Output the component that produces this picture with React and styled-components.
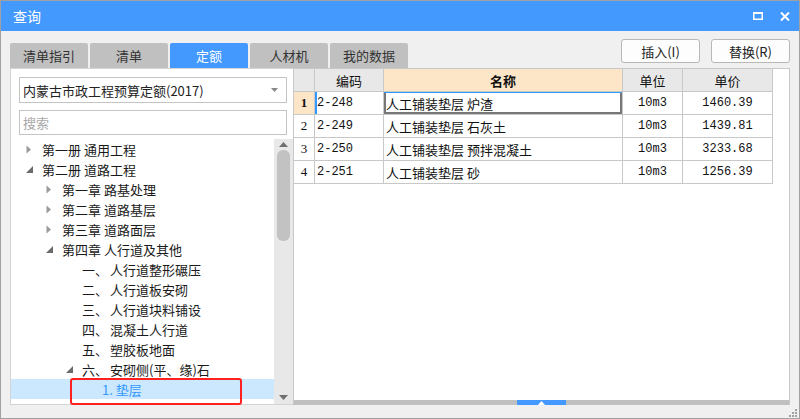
import React from 'react';
import styled, { createGlobalStyle } from 'styled-components';

const GlobalStyle = createGlobalStyle`
  html, body { margin: 0; padding: 0; background: #f0f0f0; }
  body { font-family: 'Microsoft YaHei', 'Noto Sans CJK SC', sans-serif; }
  * { box-sizing: border-box; }
`;

const Window = styled.div`
  width: 800px;
  height: 419px;
  border: 1px solid #a0a0a0;
  background: #f0f0f0;
  display: flex;
  flex-direction: column;
  overflow: hidden;
`;

const TitleBar = styled.div`
  height: 30px;
  background: #4499ff;
  display: flex;
  align-items: center;
  padding: 0 9px 0 12px;
  color: #fff;
  font-size: 14px;
`;

const Title = styled.span`
  flex: 1;
`;

const TitleButtons = styled.div`
  display: flex;
  align-items: center;
  gap: 17px;
`;

const TopRow = styled.div`
  height: 37px;
  display: flex;
  padding: 0 9px;
`;

const Tabs = styled.div`
  flex: 1;
  display: flex;
  align-items: flex-end;
  gap: 2px;
`;

const Tab = styled.div`
  width: 78px;
  height: 25px;
  border-radius: 2px 2px 0 0;
  background: ${p => (p.active ? '#4499ff' : '#c0c0c0')};
  color: ${p => (p.active ? '#fff' : '#333')};
  font-size: 13px;
  display: flex;
  align-items: center;
  justify-content: center;
`;

const Actions = styled.div`
  display: flex;
  gap: 11px;
  padding-top: 8px;
`;

const Button = styled.div`
  width: 79px;
  height: 24px;
  border: 1px solid #b8b8b8;
  border-radius: 3px;
  background: #fdfdfd;
  font-size: 13px;
  color: #222;
  display: flex;
  align-items: center;
  justify-content: center;
`;

const Main = styled.div`
  height: 337px;
  display: flex;
  padding: 0 9px;
`;

const LeftPanel = styled.div`
  width: 283px;
  background: #fff;
  border: 1px solid #d4d4d4;
  border-right: none;
  display: flex;
  flex-direction: column;
  padding-top: 8px;
`;

const Select = styled.div`
  height: 26px;
  margin: 0 6px 0 8px;
  border: 1px solid #c4c4c4;
  display: flex;
  align-items: center;
  padding: 0 8px 0 3px;
  font-size: 13px;
  color: #222;
  span { flex: 1; }
`;

const Search = styled.div`
  height: 25px;
  margin: 7px 6px 0 8px;
  border: 1px solid #c4c4c4;
  display: flex;
  align-items: center;
  padding: 0 3px;
  font-size: 13px;
  color: #a8a8a8;
`;

const TreeArea = styled.div`
  margin-top: 4px;
  flex: 1;
  display: flex;
`;

const TreeList = styled.div`
  flex: 1;
`;

const TreeRow = styled.div`
  position: relative;
  height: 20px;
  display: flex;
  align-items: center;
  padding-left: ${p => 15 + p.level * 20}px;
  background: ${p => (p.selected ? '#cce8ff' : 'transparent')};
  color: ${p => (p.selected ? '#3399ff' : '#1a1a1a')};
  font-size: 13px;
  white-space: nowrap;
`;

const ArrowBox = styled.span`
  width: 16px;
  height: 20px;
  display: flex;
  align-items: center;
  flex-shrink: 0;
`;

const Num = styled.span`
  display: inline-block;
  width: 28px;
  flex-shrink: 0;
`;

const Highlight = styled.div`
  position: absolute;
  left: 59px;
  top: -1px;
  width: 172px;
  height: 27px;
  border: 2px solid #ff2020;
  border-radius: 3px;
`;

const ScrollBar = styled.div`
  width: 19px;
  background: #e8e8e8;
  display: flex;
  flex-direction: column;
  align-items: center;
  padding: 3px 0 4px;
`;

const Thumb = styled.div`
  width: 13px;
  height: 91px;
  margin-top: 3px;
  border-radius: 6px;
  background: #c2c2c2;
`;

const Spacer = styled.div`
  flex: 1;
`;

const RightPanel = styled.div`
  flex: 1;
  background: #fff;
  border: 1px solid #c8c8c8;
  border-bottom: none;
  display: flex;
  flex-direction: column;
`;

const Grid = styled.div`
  display: grid;
  grid-template-columns: 21px 69px 239px 60px 90px;
  width: 479px;
`;

const Cell = styled.div`
  position: relative;
  height: 23px;
  border-right: 1px solid #c8c8c8;
  border-bottom: 1px solid #c8c8c8;
  display: flex;
  align-items: center;
  justify-content: ${p => (p.center ? 'center' : 'flex-start')};
  padding-left: ${p => (p.center ? 0 : 2)}px;
  font-size: ${p => (p.mono ? 12 : 13)}px;
  font-family: ${p =>
    p.mono
      ? "'Liberation Mono', 'Noto Sans CJK SC', monospace"
      : p.serif
      ? "'Liberation Serif', serif"
      : "'Microsoft YaHei', 'Noto Sans CJK SC', sans-serif"};
  font-weight: ${p => (p.bold ? 700 : 400)};
  background: ${p => p.bg || '#fff'};
  color: #111;
  ${p => p.cursor && 'box-shadow: inset 2px 0 0 #3399ff;'}
  ${p => p.focus && 'box-shadow: inset 0 1px 0 #3399ff, inset 2px 0 0 #777, inset -2px -2px 0 #777;'}
`;

const Splitter = styled.div`
  height: 5px;
  background: #c0c0c0;
  display: flex;
  justify-content: center;
`;

const SplitHandle = styled.div`
  width: 49px;
  background: #4499ff;
  display: flex;
  align-items: center;
  justify-content: center;
`;

const Footer = styled.div`
  flex: 1;
  display: flex;
  justify-content: flex-end;
  align-items: flex-end;
  padding: 0 2px 1px 0;
`;

const Collapsed = () => (
  <svg width="6" height="9" viewBox="0 0 6 9">
    <path d="M0.5 0.5 L5 4.5 L0.5 8.5 Z" fill="#9a9a9a" />
  </svg>
);

const Expanded = () => (
  <svg width="7" height="7" viewBox="0 0 7 7">
    <path d="M7 0 L7 7 L0 7 Z" fill="#6a6a6a" />
  </svg>
);

const tree = [
  { level: 0, arrow: 'c', text: '第一册 通用工程' },
  { level: 0, arrow: 'e', text: '第二册 道路工程' },
  { level: 1, arrow: 'c', text: '第一章 路基处理' },
  { level: 1, arrow: 'c', text: '第二章 道路基层' },
  { level: 1, arrow: 'c', text: '第三章 道路面层' },
  { level: 1, arrow: 'e', text: '第四章 人行道及其他' },
  { level: 2, num: '一、', text: '人行道整形碾压' },
  { level: 2, num: '二、', text: '人行道板安砌' },
  { level: 2, num: '三、', text: '人行道块料铺设' },
  { level: 2, num: '四、', text: '混凝土人行道' },
  { level: 2, num: '五、', text: '塑胶板地面' },
  { level: 2, arrow: 'e', num: '六、', text: '安砌侧(平、缘)石' },
  { level: 3, text: '1. 垫层', selected: true },
];

const rows = [
  ['2-248', '人工铺装垫层 炉渣', '10m3', '1460.39'],
  ['2-249', '人工铺装垫层 石灰土', '10m3', '1439.81'],
  ['2-250', '人工铺装垫层 预拌混凝土', '10m3', '3233.68'],
  ['2-251', '人工铺装垫层 砂', '10m3', '1256.39'],
];

export default function App() {
  return (
    <>
      <GlobalStyle />
      <Window>
        <TitleBar>
          <Title>查询</Title>
          <TitleButtons>
            <svg width="10" height="8" viewBox="0 0 10 8">
              <rect x="0.75" y="1" width="8.5" height="6.25" fill="none" stroke="#fff" strokeWidth="1.5" />
              <rect x="0" y="0" width="10" height="2" fill="#fff" />
            </svg>
            <svg width="10" height="9" viewBox="0 0 10 9">
              <path d="M1 0.5 L9 8.5 M9 0.5 L1 8.5" stroke="#fff" strokeWidth="2" />
            </svg>
          </TitleButtons>
        </TitleBar>

        <TopRow>
          <Tabs>
            <Tab>清单指引</Tab>
            <Tab>清单</Tab>
            <Tab active>定额</Tab>
            <Tab>人材机</Tab>
            <Tab>我的数据</Tab>
          </Tabs>
          <Actions>
            <Button>插入(I)</Button>
            <Button>替换(R)</Button>
          </Actions>
        </TopRow>

        <Main>
          <LeftPanel>
            <Select>
              <span>内蒙古市政工程预算定额(2017)</span>
              <svg width="7" height="4" viewBox="0 0 7 4">
                <path d="M0 0 L7 0 L3.5 4 Z" fill="#888" />
              </svg>
            </Select>
            <Search>搜索</Search>
            <TreeArea>
              <TreeList>
                {tree.map((t, i) => (
                  <TreeRow key={i} level={t.level} selected={t.selected}>
                    <ArrowBox>
                      {t.arrow === 'c' && <Collapsed />}
                      {t.arrow === 'e' && <Expanded />}
                    </ArrowBox>
                    {t.num && <Num>{t.num}</Num>}
                    <span>{t.text}</span>
                    {t.selected && <Highlight />}
                  </TreeRow>
                ))}
              </TreeList>
              <ScrollBar>
                <svg width="9" height="5" viewBox="0 0 9 5">
                  <path d="M0 5 L9 5 L4.5 0 Z" fill="#6f6f6f" />
                </svg>
                <Thumb />
                <Spacer />
                <svg width="9" height="5" viewBox="0 0 9 5">
                  <path d="M0 0 L9 0 L4.5 5 Z" fill="#6f6f6f" />
                </svg>
              </ScrollBar>
            </TreeArea>
          </LeftPanel>

          <RightPanel>
            <Grid>
              <Cell bg="#e8e8e8" />
              <Cell bg="#e8e8e8" center>编码</Cell>
              <Cell bg="#fde6c8" center bold>名称</Cell>
              <Cell bg="#e8e8e8" center>单位</Cell>
              <Cell bg="#e8e8e8" center>单价</Cell>
              {rows.map((r, i) => (
                <React.Fragment key={r[0]}>
                  <Cell center serif bold={i === 0} bg={i === 0 ? '#fde6c8' : '#fff'}>
                    {i + 1}
                  </Cell>
                  <Cell mono cursor={i === 0}>{r[0]}</Cell>
                  <Cell focus={i === 0}>{r[1]}</Cell>
                  <Cell mono center>{r[2]}</Cell>
                  <Cell mono center>{r[3]}</Cell>
                </React.Fragment>
              ))}
            </Grid>
            <Spacer />
            <Splitter>
              <SplitHandle>
                <svg width="7" height="4" viewBox="0 0 7 4">
                  <path d="M0 4 L7 4 L3.5 0 Z" fill="#fff" />
                </svg>
              </SplitHandle>
            </Splitter>
          </RightPanel>
        </Main>

        <Footer>
          <svg width="8" height="8" viewBox="0 0 8 8">
            <rect x="6" y="0" width="2" height="2" fill="#a0a0a0" />
            <rect x="3" y="3" width="2" height="2" fill="#a0a0a0" />
            <rect x="6" y="3" width="2" height="2" fill="#a0a0a0" />
            <rect x="0" y="6" width="2" height="2" fill="#a0a0a0" />
            <rect x="3" y="6" width="2" height="2" fill="#a0a0a0" />
            <rect x="6" y="6" width="2" height="2" fill="#a0a0a0" />
          </svg>
        </Footer>
      </Window>
    </>
  );
}
